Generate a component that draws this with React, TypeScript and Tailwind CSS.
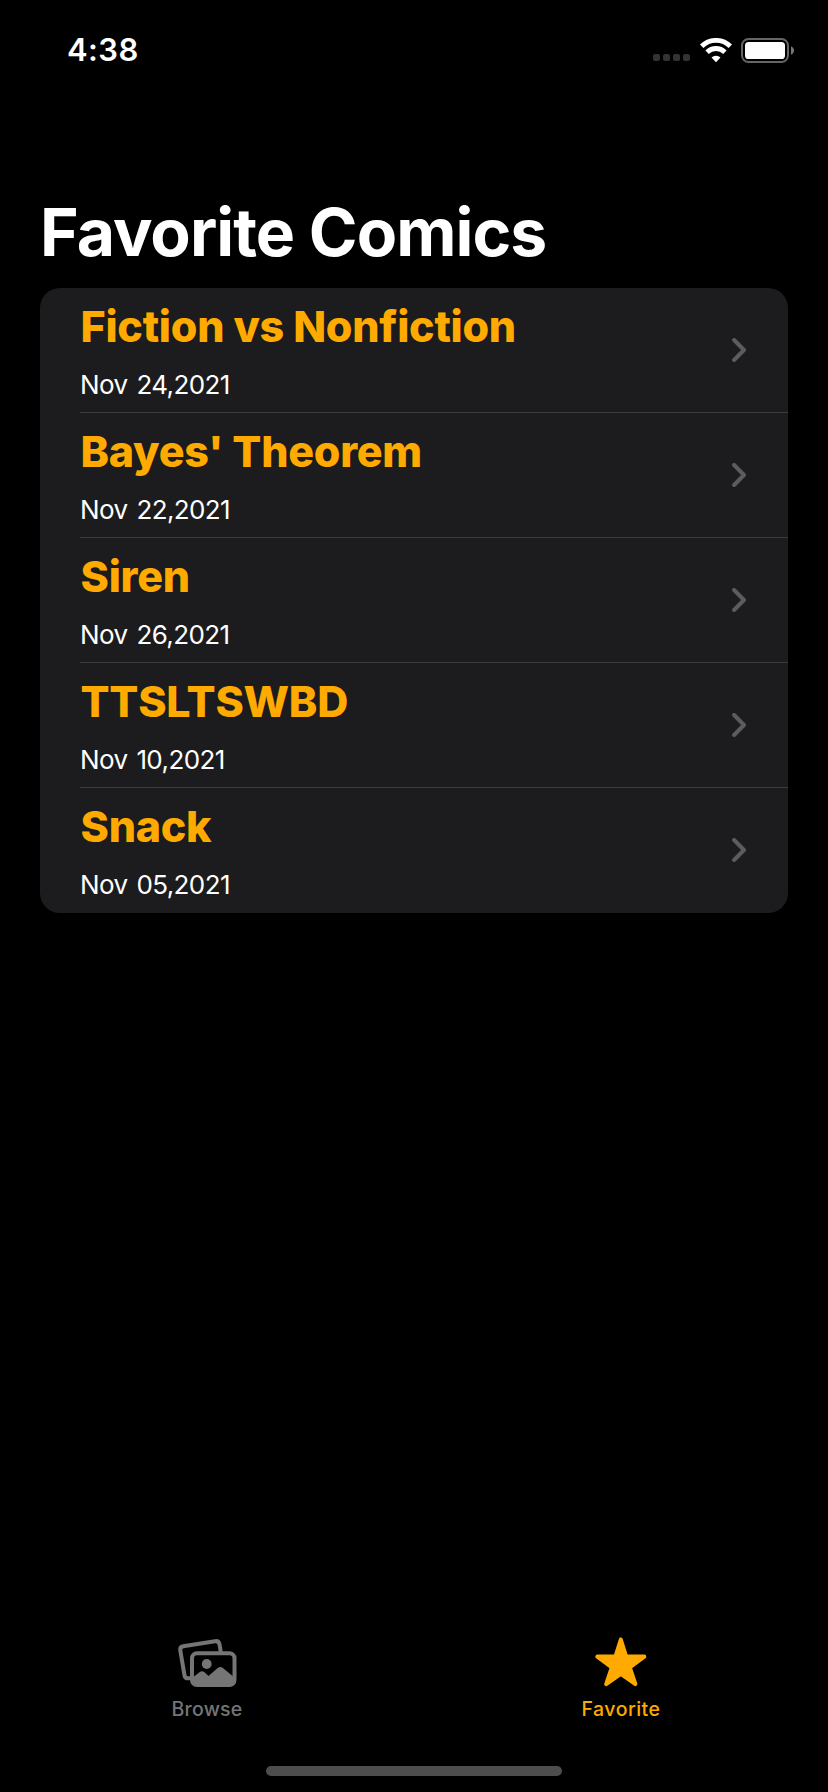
type Comic = { title: string; date: string };

const comics: Comic[] = [
  { title: "Fiction vs Nonfiction", date: "Nov 24,2021" },
  { title: "Bayes' Theorem", date: "Nov 22,2021" },
  { title: "Siren", date: "Nov 26,2021" },
  { title: "TTSLTSWBD", date: "Nov 10,2021" },
  { title: "Snack", date: "Nov 05,2021" },
];

function WifiIcon() {
  return (
    <svg width="32" height="25" viewBox="0 0 32 25" fill="none">
      <path d="M1.700 8.300a20.200 20.200 0 0 1 28.600 0" stroke="#fff" strokeWidth="4.800" />
      <path d="M7.100 14.200a12.600 12.600 0 0 1 17.800 0" stroke="#fff" strokeWidth="4.800" />
      <path d="M16 24.200l-4.500-4.600a6.400 6.400 0 0 1 9 0z" fill="#fff" />
    </svg>
  );
}

function BatteryIcon() {
  return (
    <svg width="54" height="25" viewBox="0 0 54 25" fill="none">
      <rect x="1" y="1" width="46" height="23" rx="6.500" stroke="#666" strokeWidth="2" />
      <rect x="4" y="4" width="40" height="17" rx="3.600" fill="#fff" />
      <path d="M50 8.300c1.800.7 3 2.300 3 4.200s-1.200 3.500-3 4.200z" fill="#777" />
    </svg>
  );
}

function StatusBar() {
  return (
    <header className="flex h-[100px] items-center justify-between pr-[33px] pl-[67px]">
      <span className="text-[31px] leading-[40px] font-semibold tracking-[0.4px]">4:38</span>
      <div className="flex items-center">
        <div className="mt-[15px] mr-[10px] flex gap-[3px]">
          {[0, 1, 2, 3].map((dot) => (
            <span key={dot} className="size-[7px] rounded-[2px] bg-[#333333]" />
          ))}
        </div>
        <div className="flex items-center gap-[9px]">
          <WifiIcon />
          <BatteryIcon />
        </div>
      </div>
    </header>
  );
}

function ComicRow({ comic, last }: { comic: Comic; last: boolean }) {
  return (
    <li className="pl-10">
      <div
        className={`flex h-[125px] items-center justify-between border-b pr-[41px] ${last ? "border-transparent" : "border-[#3d3d41]"}`}
      >
        <div className="flex h-full flex-col gap-[18px] pt-3">
          <h2 className="pl-[0.5px] text-[43px] leading-[52px] font-extrabold tracking-[-0.25px] whitespace-nowrap text-[#ffaa00]">
            {comic.title}
          </h2>
          <p className="text-[26px] leading-[30px] font-normal tracking-[-0.6px] whitespace-nowrap [word-spacing:2.2px]">
            {comic.date}
          </p>
        </div>
        <svg width="15" height="24" viewBox="0 0 15 24" fill="none">
          <path d="M2.100 2L12 12L2.100 22" stroke="#5b5b60" strokeWidth="4" strokeLinecap="round" strokeLinejoin="round" />
        </svg>
      </div>
    </li>
  );
}

function BrowseIcon() {
  return (
    <svg width="60" height="54" viewBox="-1 0 60 54" fill="none">
      <path
        d="M14 42.300H10Q7 42.300 6.500 39.300L2.300 14.500Q1.700 10.800 5.200 10.200L37 5.200Q40.800 4.600 41.500 8.300L42.500 14.500V17"
        stroke="#757575"
        strokeWidth="4"
      />
      <rect x="14" y="17.300" width="42.500" height="31.700" rx="5" stroke="#757575" strokeWidth="4" />
      <circle cx="28.700" cy="28" r="4.900" fill="#757575" />
      <path d="M14 42L21.800 36Q24 34.300 26.200 36L30.500 40L40 31.800Q42.300 30 44.600 31.800L57 42V45Q57 49 53 49H18Q14 49 14 45Z" fill="#757575" />
    </svg>
  );
}

function StarIcon() {
  return (
    <svg width="60" height="54" viewBox="0.500 0 60 54">
      <path
        d="M30.300 3.500L35.500 20.200L53.800 20.600L39.300 31.500L44.900 48.200L30.300 37.800L15.700 48.200L21.300 31.500L6.800 20.600L25.100 20.200Z"
        fill="#ffaa00"
        stroke="#ffaa00"
        strokeWidth="4"
        strokeLinejoin="round"
      />
    </svg>
  );
}

export default function App() {
  return (
    <div className="flex h-[1792px] w-[828px] flex-col bg-black font-['Inter',sans-serif] text-white">
      <StatusBar />
      <main className="flex-1 px-10 pt-[92px]">
        <h1 className="h-[96px] text-[66px] leading-[80px] font-bold tracking-[-0.95px] whitespace-nowrap">
          Favorite Comics
        </h1>
        <ul className="overflow-hidden rounded-[20px] bg-[#1c1c1e]">
          {comics.map((comic, i) => (
            <ComicRow key={comic.title} comic={comic} last={i === comics.length - 1} />
          ))}
        </ul>
      </main>
      <nav className="grid h-[130px] grid-cols-2 text-[19.5px] leading-[24px] font-medium">
        <a className="flex flex-col items-center gap-[7px] text-[#757575]">
          <BrowseIcon />
          <span className="tracking-[0.2px]">Browse</span>
        </a>
        <a className="flex flex-col items-center gap-[7px] text-[#ffaa00]">
          <StarIcon />
          <span className="tracking-[0.5px]">Favorite</span>
        </a>
      </nav>
      <div className="flex h-[26px] justify-center">
        <div className="h-[10px] w-[296px] rounded-full bg-[#4d4d4d]" />
      </div>
    </div>
  );
}
